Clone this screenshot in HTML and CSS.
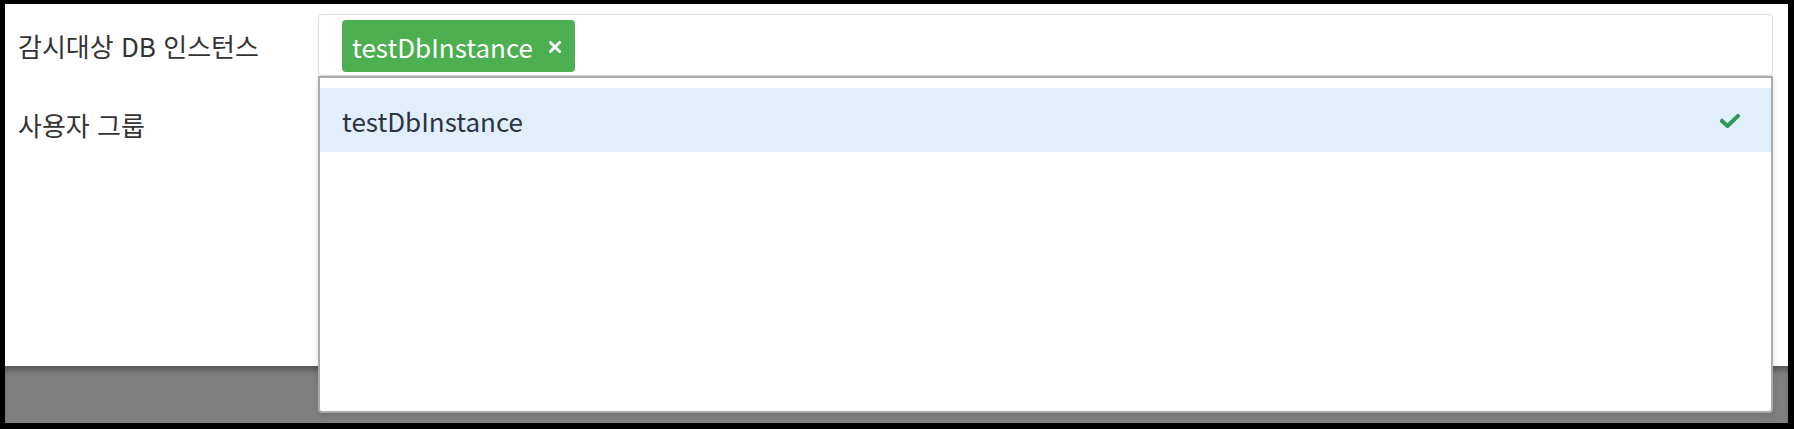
FILE: index.html
```html
<!DOCTYPE html>
<html lang="ko">
<head>
<meta charset="utf-8">
<link rel="stylesheet" href="styles.css">
</head>
<body>
<div class="frame">
  <div class="modal">
    <div class="form-row first">
      <div class="label">감시대상 DB 인스턴스</div>
      <div class="select-box">
        <span class="tag">testDbInstance<svg class="tag-x" width="12" height="12" viewBox="0 0 12 12"><path d="M1.5 1.5 L10.5 10.5 M10.5 1.5 L1.5 10.5" stroke="#fff" stroke-width="2.8" stroke-linecap="square"/></svg></span>
      </div>
    </div>
    <div class="form-row">
      <div class="label">사용자 그룹</div>
    </div>
  </div>
  <div class="overlay"></div>
  <div class="dropdown">
    <div class="option selected">
      <span>testDbInstance</span>
      <svg class="check" width="20" height="14" viewBox="0 0 20 14"><polyline points="2,7 7.5,12 18,2" fill="none" stroke="#2f9a59" stroke-width="4" stroke-linecap="square"/></svg>
    </div>
  </div>
</div>
</body>
</html>
```
FILE: styles.css
```css
html, body {
  margin: 0;
  padding: 0;
  background: #000;
}
body {
  font-family: "Noto Sans CJK KR", "Noto Sans", sans-serif;
  padding: 4px 6px 6px 5px;
}
.frame {
  position: relative;
  width: 1783px;
  height: 419px;
  display: flex;
  flex-direction: column;
}
.modal {
  background: #fff;
  height: 362px;
  padding-top: 10px;
  box-sizing: border-box;
}
.overlay {
  flex: 1;
  background: #808080;
  box-shadow: inset 0 7px 6px -3px rgba(0, 0, 0, 0.35);
}
.form-row {
  display: flex;
  align-items: center;
  height: 62px;
}
.form-row + .form-row {
  margin-top: 17px;
}
.label {
  width: 300px;
  padding-left: 13px;
  flex: none;
  font-size: 26px;
  color: #333;
}
.select-box {
  flex: none;
  width: 1455px;
  height: 62px;
  box-sizing: border-box;
  border: 1px solid #dcdcdc;
  border-radius: 4px;
  padding: 5px 0 0 23px;
}
.tag {
  display: inline-flex;
  align-items: center;
  height: 52px;
  box-sizing: border-box;
  padding: 0 14px 0 10px;
  background: #4caf50;
  border-radius: 4px;
  color: #fff;
  font-size: 26px;
}
.tag-x {
  display: block;
  margin-left: 16px;
  margin-top: 2px;
}
.dropdown {
  position: absolute;
  left: 313px;
  top: 72px;
  width: 1455px;
  height: 337px;
  box-sizing: border-box;
  background: #fff;
  border: 2px solid #aaa;
  border-radius: 0 0 4px 4px;
  padding-top: 10px;
  box-shadow: 0 2px 6px rgba(0, 0, 0, 0.15);
}
.option {
  height: 64px;
  display: flex;
  align-items: center;
  justify-content: space-between;
  padding: 0 31px 0 22px;
  font-size: 26px;
  color: #2b3440;
}
.option.selected {
  background: #e1eefc;
}
.check {
  display: block;
  margin-top: 2px;
}
```
